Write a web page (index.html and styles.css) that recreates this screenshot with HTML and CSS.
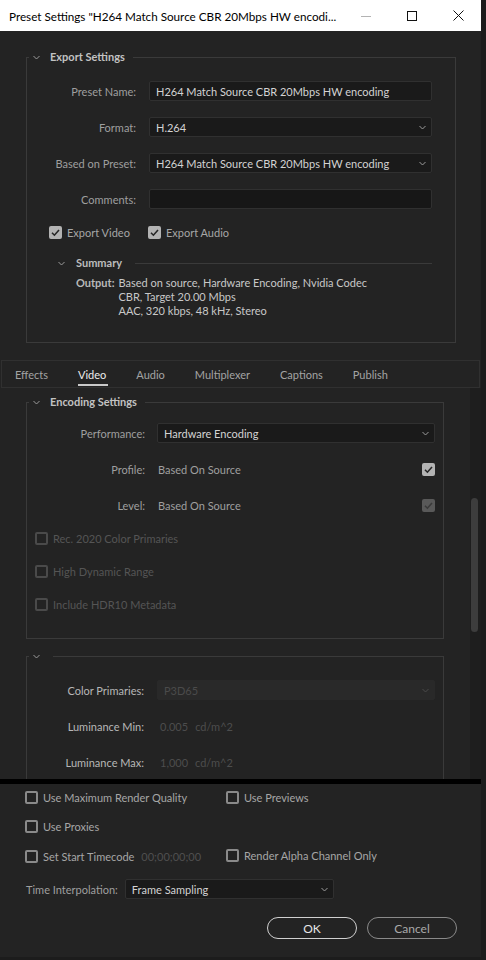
FILE: index.html
```html
<!DOCTYPE html>
<html lang="en">

<head>
	<meta charset="UTF-8">
	<meta name="viewport" content="width=device-width, initial-scale=1.0">
	<title>Preset Settings</title>
	<link rel="stylesheet" href="styles.css">
</head>

<body>

	<div class="dialog">
		<div class="titlebar">
			<span class="title">Preset Settings "H264 Match Source CBR 20Mbps HW encodi...</span>
			<div class="win-controls">
				<span class="win-btn"><svg width="10" height="10" viewBox="0 0 10 10"><path d="M0 5.5h10" stroke="#b3b3b3" stroke-width="1" /></svg></span>
				<span class="win-btn"><svg width="10" height="10" viewBox="0 0 10 10"><rect x="0.5" y="0.5" width="9" height="9" fill="none" stroke="#111" stroke-width="1" /></svg></span>
				<span class="win-btn"><svg width="11" height="11" viewBox="0 0 11 11"><path d="M0.5 0.5l10 10M10.5 0.5l-10 10" stroke="#111" stroke-width="1" /></svg></span>
			</div>
		</div>

		<!-- Export Settings -->
		<fieldset class="group export">
			<legend><svg class="chevron" viewBox="0 0 7 5"><path d="M0.5 1l3 3 3-3" /></svg>Export Settings</legend>
			<div class="group-body">
				<div class="form-row">
					<label>Preset Name:</label>
					<div class="field">H264 Match Source CBR 20Mbps HW encoding</div>
				</div>
				<div class="form-row">
					<label>Format:</label>
					<div class="field select">H.264<svg class="chevron" viewBox="0 0 7 5"><path d="M0.5 1l3 3 3-3" /></svg></div>
				</div>
				<div class="form-row">
					<label>Based on Preset:</label>
					<div class="field select">H264 Match Source CBR 20Mbps HW encoding<svg class="chevron" viewBox="0 0 7 5"><path d="M0.5 1l3 3 3-3" /></svg></div>
				</div>
				<div class="form-row">
					<label>Comments:</label>
					<div class="field empty"></div>
				</div>
				<div class="check-row export-checks">
					<span class="check"><span class="box on"><svg viewBox="0 0 13 13"><path d="M3 6.8l2.4 2.4 4.6-5.2" /></svg></span>Export Video</span>
					<span class="check"><span class="box on"><svg viewBox="0 0 13 13"><path d="M3 6.8l2.4 2.4 4.6-5.2" /></svg></span>Export Audio</span>
				</div>
				<div class="summary">
					<div class="summary-head"><svg class="chevron" viewBox="0 0 7 5"><path d="M0.5 1l3 3 3-3" /></svg>Summary</div>
					<div class="summary-out">
						<span class="out-label">Output:</span>
						<div class="out-lines">
							<div>Based on source, Hardware Encoding, Nvidia Codec</div>
							<div>CBR, Target 20.00 Mbps</div>
							<div>AAC, 320 kbps, 48 kHz, Stereo</div>
						</div>
					</div>
				</div>
			</div>
		</fieldset>

		<!-- Tabs -->
		<div class="tabs">
			<span class="tab">Effects</span>
			<span class="tab active">Video</span>
			<span class="tab">Audio</span>
			<span class="tab">Multiplexer</span>
			<span class="tab">Captions</span>
			<span class="tab">Publish</span>
		</div>

		<div class="scroll">
			<div class="scroll-content">
				<fieldset class="group encoding">
					<legend><svg class="chevron" viewBox="0 0 7 5"><path d="M0.5 1l3 3 3-3" /></svg>Encoding Settings</legend>
					<div class="group-body">
						<div class="form-row">
							<label>Performance:</label>
							<div class="field select">Hardware Encoding<svg class="chevron" viewBox="0 0 7 5"><path d="M0.5 1l3 3 3-3" /></svg></div>
						</div>
						<div class="form-row">
							<label>Profile:</label>
							<div class="value-row"><span>Based On Source</span><span class="box on"><svg viewBox="0 0 13 13"><path d="M3 6.8l2.4 2.4 4.6-5.2" /></svg></span></div>
						</div>
						<div class="form-row">
							<label>Level:</label>
							<div class="value-row"><span>Based On Source</span><span class="box on dim"><svg viewBox="0 0 13 13"><path d="M3 6.8l2.4 2.4 4.6-5.2" /></svg></span></div>
						</div>
						<div class="check-row disabled"><span class="check"><span class="box"></span>Rec. 2020 Color Primaries</span></div>
						<div class="check-row disabled"><span class="check"><span class="box"></span>High Dynamic Range</span></div>
						<div class="check-row disabled"><span class="check"><span class="box"></span>Include HDR10 Metadata</span></div>
					</div>
				</fieldset>

				<fieldset class="group hdr">
					<legend><svg class="chevron" viewBox="0 0 7 5"><path d="M0.5 1l3 3 3-3" /></svg></legend>
					<div class="group-body">
						<div class="form-row">
							<label class="bright">Color Primaries:</label>
							<div class="field select disabled">P3D65<svg class="chevron" viewBox="0 0 7 5"><path d="M0.5 1l3 3 3-3" /></svg></div>
						</div>
						<div class="form-row">
							<label class="bright">Luminance Min:</label>
							<div class="dim-values"><span>0.005</span><span>cd/m^2</span></div>
						</div>
						<div class="form-row">
							<label class="bright">Luminance Max:</label>
							<div class="dim-values"><span>1,000</span><span>cd/m^2</span></div>
						</div>
					</div>
				</fieldset>
			</div>
			<div class="scrollbar"><div class="thumb"></div></div>
		</div>

		<div class="divider"></div>

		<!-- Bottom options -->
		<div class="bottom">
			<div class="options">
				<span class="check"><span class="box"></span>Use Maximum Render Quality</span>
				<span class="check"><span class="box"></span>Use Previews</span>
				<span class="check"><span class="box"></span>Use Proxies</span>
				<span></span>
				<span class="check"><span class="box"></span>Set Start Timecode <span class="timecode">00;00;00;00</span></span>
				<span class="check alpha"><span class="box"></span>Render Alpha Channel Only</span>
			</div>
			<div class="interp">
				<label>Time Interpolation:</label>
				<div class="field select">Frame Sampling<svg class="chevron" viewBox="0 0 7 5"><path d="M0.5 1l3 3 3-3" /></svg></div>
			</div>
			<div class="buttons">
				<button class="btn btn-ok">OK</button>
				<button class="btn">Cancel</button>
			</div>
		</div>
	</div>

</body>

</html>
```

FILE: styles.css
```css
* {
	box-sizing: border-box;
}

body {
	margin: 0;
	background-color: #1c1c1c;
	font-family: Lato, "Open Sans", sans-serif;
	font-size: 11px;
	color: #9f9f9f;
}

.dialog {
	width: 481px;
	height: 957px;
	background-color: #232323;
	display: flex;
	flex-direction: column;
	overflow: hidden;
}

/* Title bar */
.titlebar {
	height: 31px;
	flex: none;
	background-color: #fff;
	color: #000;
	font-size: 11.7px;
	display: flex;
	align-items: center;
	padding-left: 9px;
}

.titlebar .title {
	flex: 1;
	white-space: nowrap;
}

.win-controls {
	display: flex;
	height: 100%;
}

.win-btn {
	width: 46px;
	display: flex;
	align-items: center;
	justify-content: center;
}

/* Chevrons */
.chevron {
	width: 7px;
	height: 5px;
	flex: none;
}

.chevron path {
	fill: none;
	stroke: #9a9a9a;
	stroke-width: 1;
}

/* Grouped boxes */
.group {
	margin: 0;
	padding: 0;
	min-width: 0;
	border: 1px solid #3a3a3a;
}

.group legend {
	display: flex;
	align-items: center;
	margin-left: 2px;
	padding: 0 8px 0 4px;
	line-height: 14px;
	font-weight: bold;
	color: #c2c2c2;
}

.group legend .chevron {
	margin-right: 10px;
}

.group-body {
	display: flex;
	flex-direction: column;
	gap: 16px;
}

.form-row {
	display: grid;
	align-items: center;
	height: 20px;
}

.form-row label {
	text-align: right;
	white-space: nowrap;
}

.field {
	height: 20px;
	background-color: #1a1a1a;
	border: 1px solid #303030;
	border-radius: 2px;
	padding: 0 5px 0 6px;
	display: flex;
	align-items: center;
	justify-content: space-between;
	color: #d3d3d3;
	white-space: nowrap;
}

.field.empty {
	background-color: #171717;
}

.field.disabled {
	background-color: #292929;
	border-color: #292929;
	color: #4b4b4b;
}

.field.disabled .chevron path {
	stroke: #4b4b4b;
}

/* Checkboxes */
.check {
	display: flex;
	align-items: center;
	gap: 5px;
	white-space: nowrap;
}

.box {
	width: 13px;
	height: 13px;
	flex: none;
	border: 2px solid #8a8a8a;
	border-radius: 2px;
	display: flex;
}

.box svg {
	width: 13px;
	height: 13px;
	margin: -2px;
}

.box svg path {
	fill: none;
	stroke: #262626;
	stroke-width: 1.6;
}

.box.on {
	background-color: #b3b3b3;
	border-color: #b3b3b3;
}

.box.on.dim {
	background-color: #595959;
	border-color: #595959;
}

.box.on.dim svg path {
	stroke: #3a3a3a;
}

.check-row {
	height: 14px;
	display: flex;
	align-items: center;
}

.check-row.disabled {
	color: #555;
	padding-left: 8px;
}

.check-row.disabled .box {
	border-color: #4a4a4a;
}

/* Export Settings */
.export {
	margin: 19px 25px 0 26px;
}

.export .group-body {
	padding: 17px 23px 24px 0;
}

.export .form-row {
	grid-template-columns: 109px 1fr;
	column-gap: 13px;
}

.export-checks {
	padding-left: 22px;
	gap: 18px;
	color: #a6a6a6;
}

.summary {
	margin-top: 1px;
}

.summary-head {
	display: flex;
	align-items: center;
	padding-left: 31px;
	line-height: 14px;
	font-weight: bold;
	color: #bdbdbd;
}

.summary-head .chevron {
	margin-right: 11px;
}

.summary-head::after {
	content: "";
	flex: 1;
	height: 1px;
	background-color: #3a3a3a;
	margin-left: 13px;
}

.summary-out {
	display: flex;
	gap: 4px;
	padding-left: 49px;
	margin-top: 6px;
	line-height: 14px;
	color: #c8c8c8;
}

.out-label {
	font-weight: bold;
	color: #b9b9b9;
}

/* Tabs */
.tabs {
	flex: none;
	height: 28px;
	margin: 17px 1px 0 1px;
	border: 1px solid #303030;
	display: flex;
	align-items: stretch;
	padding: 1px 0 0 13px;
}

.tab {
	position: relative;
	display: flex;
	align-items: center;
	margin-right: 30px;
	color: #a3a3a3;
}

.tab.active {
	color: #ececec;
}

.tab.active::after {
	content: "";
	position: absolute;
	left: 0;
	right: -2px;
	bottom: 1px;
	height: 2px;
	background-color: #c9c9c9;
}

/* Scrolling settings area */
.scroll {
	flex: none;
	height: 391px;
	display: flex;
}

.scroll-content {
	flex: 1;
	overflow: hidden;
}

.scrollbar {
	width: 11px;
	background-color: #1e1e1e;
	padding: 110px 0 0 1px;
}

.scrollbar .thumb {
	width: 7px;
	height: 134px;
	border-radius: 4px;
	background-color: #3d3d3d;
}

.encoding {
	margin: 7px 26px 0 26px;
}

.encoding .group-body {
	padding: 14px 8px 27px 0;
}

.encoding .form-row {
	grid-template-columns: 118px 1fr;
	column-gap: 12px;
}

.encoding .check-row + .check-row {
	margin-top: 3px;
}

.value-row {
	display: flex;
	align-items: center;
	justify-content: space-between;
	padding-left: 1px;
}

.hdr {
	margin: 15px 26px 0 26px;
}

.hdr legend {
	padding: 0 13px 0 4px;
}

.hdr legend .chevron {
	margin-right: 0;
}

.hdr .group-body {
	padding: 21px 8px 30px 0;
}

.hdr .form-row {
	grid-template-columns: 117px 1fr;
	column-gap: 13px;
}

.form-row label.bright {
	color: #b7b7b7;
}

.dim-values {
	display: flex;
	gap: 7px;
	padding-left: 3px;
	color: #4d4d4d;
}

.divider {
	flex: none;
	height: 5px;
	background-color: #000;
}

/* Bottom options */
.bottom {
	flex: 1;
	padding: 6px 24px 0 25px;
}

.options {
	display: grid;
	grid-template-columns: 201px 1fr;
	grid-auto-rows: 14px;
	row-gap: 15.5px;
	color: #a6a6a6;
}

.options .alpha {
	margin-top: -2px;
}

.timecode {
	color: #4f4f4f;
	margin-left: 2px;
}

.interp {
	display: flex;
	align-items: center;
	gap: 7px;
	margin-top: 16px;
	padding-left: 1px;
}

.interp .field {
	width: 209px;
}

.buttons {
	display: flex;
	justify-content: flex-end;
	gap: 10px;
	margin-top: 18px;
}

.btn {
	width: 90px;
	height: 22px;
	border-radius: 11px;
	background-color: transparent;
	border: 1.5px solid #8a8a8a;
	color: #a9a9a9;
	font-family: Lato, "Open Sans", sans-serif;
	font-size: 12px;
	padding: 0;
}

.btn-ok {
	border-color: #d0d0d0;
	color: #e6e6e6;
}
```
